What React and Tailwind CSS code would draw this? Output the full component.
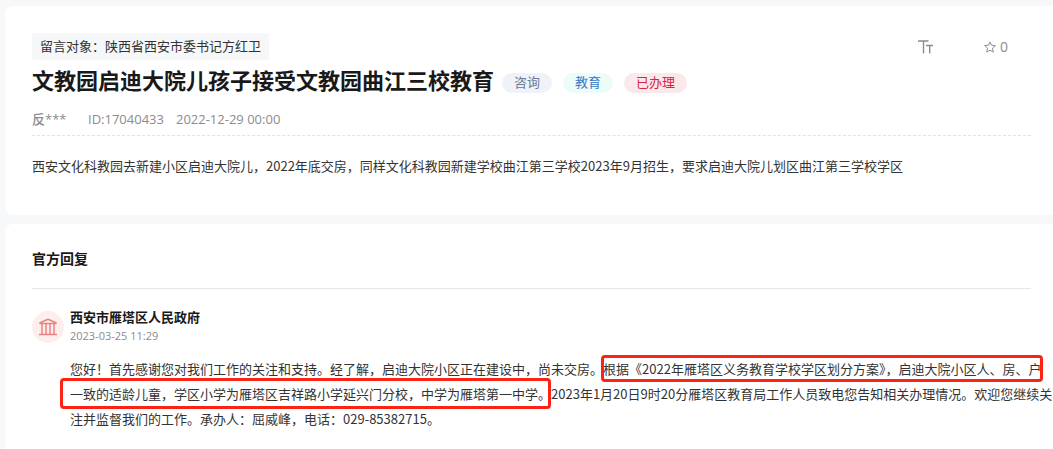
function TextSizeIcon() {
  return (
    <svg width="16" height="14" viewBox="0 0 16 14" fill="none" stroke="#8c8c8c" strokeWidth="1.4" aria-hidden="true">
      <path d="M0 1H10.5M5.5 1V13.5" />
      <path d="M8 5.5H15M11.7 5.5V13.5" />
    </svg>
  );
}

function StarIcon() {
  return (
    <svg width="12" height="12" viewBox="0 0 12 12" fill="none" stroke="#8c8c8c" strokeWidth="1" strokeLinejoin="round" aria-hidden="true">
      <path d="M6 0.9L7.5 4.2L11.3 4.6L8.5 7.1L9.3 11.1L6 9.2L2.7 11.1L3.5 7.1L0.7 4.6L4.5 4.2Z" />
    </svg>
  );
}

function GovernmentIcon() {
  return (
    <svg width="18" height="18" viewBox="0 0 18 18" fill="none" stroke="#e88682" strokeWidth="1.5" aria-hidden="true">
      <path d="M0.5 5L9 1.3L17.5 5" strokeLinejoin="round" />
      <path d="M0.5 5.6H17.5M0 16.5H18" />
      <path d="M3 6V16.5M7 6V16.5M11 6V16.5M15 6V16.5" />
    </svg>
  );
}

function Tag({ className, children }) {
  return <span className={`flex h-5 items-center rounded-full px-3 text-[13px] ${className}`}>{children}</span>;
}

function Highlight({ className, children }) {
  return (
    <span className="relative lg:inline-block">
      {children}
      <span aria-hidden="true" className={`pointer-events-none absolute rounded-sm border-3 border-[#fb2314] ${className}`} />
    </span>
  );
}

export default function App() {
  return (
    <div className="flex min-h-screen flex-col gap-[9px] overflow-x-hidden bg-[#f7f8fa] pt-1.5 pl-[5px] font-['Open_Sans','Noto_Sans_CJK_SC',sans-serif] text-[13px] text-[#333]">
      <article className="rounded-l-lg bg-white pt-[27px] pr-[22px] pb-[37px] pl-[27px]">
        <div className="flex items-center justify-between">
          <p className="rounded-xs bg-[#f6f7f9] px-2 leading-[27px]">留言对象：陕西省西安市委书记方红卫</p>
          <div className="flex items-center gap-[50px] pr-[23px] text-[#8c8c8c]">
            <button type="button" aria-label="字号">
              <TextSizeIcon />
            </button>
            <button type="button" className="flex items-center gap-1 text-sm leading-5">
              <StarIcon />0
            </button>
          </div>
        </div>
        <div className="flex h-10 items-center gap-2">
          <h1 className="text-[22px] leading-8 font-bold text-[#191919]">文教园启迪大院儿孩子接受文教园曲江三校教育</h1>
          <div className="flex gap-[11px] pt-1.5">
            <Tag className="bg-[#eff2f9] text-[#6c7a93]">咨询</Tag>
            <Tag className="bg-[#ebfcfa] text-[#3a76c4]">教育</Tag>
            <Tag className="bg-[#fae8ea] text-[#d8243c]">已办理</Tag>
          </div>
        </div>
        <div className="flex border-b border-dashed border-[#e2e2e2] pt-[7px] pb-[3px] leading-[25px] text-[#8c8c8c]">
          <span className="w-14 font-medium">反***</span>
          <span className="mr-3">ID:17040433</span>
          <time>2022-12-29 00:00</time>
        </div>
        <p className="pt-[17px] font-['Noto_Sans_CJK_SC',sans-serif] leading-[25px]">
          西安文化科教园去新建小区启迪大院儿，2022年底交房，同样文化科教园新建学校曲江第三学校2023年9月招生，要求启迪大院儿划区曲江第三学校学区
        </p>
      </article>

      <section className="grow rounded-tl-lg bg-white pt-[22px] pr-[22px] pl-[27px]">
        <h2 className="border-b border-[#e6e6e6] pb-[17px] text-sm leading-[25px] font-bold text-[#191919]">官方回复</h2>
        <div className="flex items-start gap-1.5 pt-[15px]">
          <div className="mt-[7px] flex size-8 shrink-0 items-center justify-center rounded-full bg-[#fdeeee]">
            <GovernmentIcon />
          </div>
          <div>
            <h3 className="leading-[26px] font-bold text-[#191919]">西安市雁塔区人民政府</h3>
            <time className="block text-[11px] leading-3 text-[#8c8c8c]">2023-03-25 11:29</time>
            <p className="pt-[14px] font-['Noto_Sans_CJK_SC',sans-serif] leading-[25px] lg:whitespace-nowrap">
              您好！首先感谢您对我们工作的关注和支持。经了解，启迪大院小区正在建设中，尚未交房。
              <Highlight className="-inset-x-0.5 -top-px -bottom-px">根据《2022年雁塔区义务教育学校学区划分方案》，启迪大院小区人、房、户</Highlight>
              <br />
              <Highlight className="-top-[3px] right-0 -bottom-[3px] -left-2.5">一致的适龄儿童，学区小学为雁塔区吉祥路小学延兴门分校，中学为雁塔第一中学。</Highlight>
              2023年1月20日9时20分雁塔区教育局工作人员致电您告知相关办理情况。欢迎您继续关
              <br />
              注并监督我们的工作。承办人：屈威峰，电话：029-85382715。
            </p>
          </div>
        </div>
      </section>
    </div>
  );
}
